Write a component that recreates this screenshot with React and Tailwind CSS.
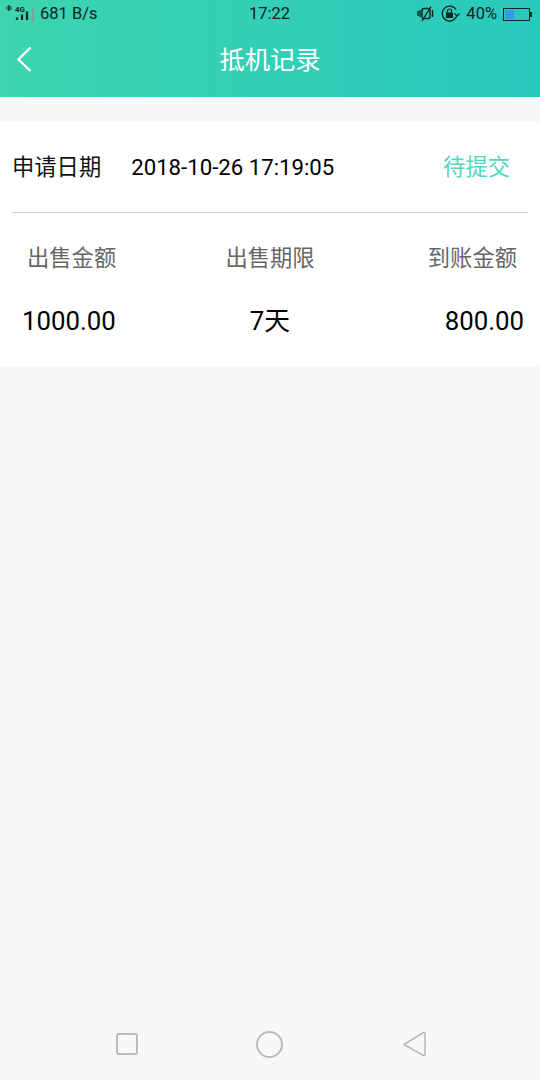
const font = { fontFamily: 'Roboto, "Noto Sans CJK SC", sans-serif' };

export default function App() {
  return (
    <div className="flex h-[1080px] w-[540px] flex-col overflow-hidden bg-[#f8f8f8]" style={font}>
      {/* header */}
      <div className="h-[97px] bg-gradient-to-r from-[#3dd4ae] to-[#28c9bd]">
        <div className="flex h-[28px] items-center pl-[6px] pr-[8px] text-[16.5px] text-[#10231f]">
          <div className="flex w-[243px] items-center">
            <svg width="26" height="28" viewBox="0 0 26 28" fill="none">
              <path d="M0 8l2.5-2.5v5zM3.5 5.5v5M5 6l0 4" stroke="#10231f" strokeWidth="0.8" />
              <text x="9" y="11.5" fontSize="8" fontWeight="700" fill="#10231f">4G</text>
              <path d="M11 20v-2.5M16 20v-5.5M21 20v-8.5" stroke="#10231f" strokeWidth="2.2" />
            </svg>
            <div className="h-[15px] w-[2px] bg-[#7f9f98]" />
            <span className="ml-[6px]">681 B/s</span>
          </div>
          <span>17:22</span>
          <div className="ml-auto flex items-center">
            <svg width="18" height="16" viewBox="0 0 18 16" fill="none" stroke="#10231f" strokeWidth="1.4">
              <rect x="5" y="2.5" width="8" height="10" rx="2" />
              <path d="M14 0.5L5 15M1 5v5M3 4v7M15.5 4v7" />
            </svg>
            <svg className="ml-[6px]" width="19" height="18" viewBox="0 0 19 18" fill="none" stroke="#10231f" strokeWidth="1.2">
              <path d="M15.8 11A7.5 7.5 0 1 1 15 4.5" />
              <path d="M13.5 8.5L16 11l2.5-2.5" />
              <rect x="5" y="7.5" width="7" height="5.5" fill="#10231f" stroke="none" />
              <path d="M6.5 7.5V6a2 2 0 0 1 4 0v1.5" />
            </svg>
            <span className="ml-[6px]">40%</span>
            <div className="ml-[6px] flex items-center">
              <div className="flex h-[13px] w-[27px] border border-[#10231f] p-[1px]">
                <div className="w-[9px] bg-[#2f9bf0]" />
              </div>
              <div className="h-[5px] w-[2px] bg-[#10231f]" />
            </div>
          </div>
        </div>
        <div className="relative flex h-[65px] items-center justify-center">
          <svg className="absolute left-[16px] top-[18px]" width="17" height="26" viewBox="0 0 17 26" fill="none" stroke="white" strokeWidth="2.4">
            <path d="M14.5 1.5L2.5 13.5l12 11.5" />
          </svg>
          <span className="text-[25.3px] text-white">抵机记录</span>
        </div>
      </div>

      {/* record card */}
      <div className="mt-[24px] h-[246px] bg-white px-[12px]">
        <div className="flex h-[92px] items-center border-b border-[#cccccc] pt-[2px]">
          <span className="text-[22.3px] text-[#111111]">申请日期</span>
          <span className="ml-[30px] text-[22.2px] text-black">2018-10-26 17:19:05</span>
          <span className="ml-auto mr-[18px] text-[22.3px] text-[#4fd8bc]">待提交</span>
        </div>
        <div className="mt-[30px] grid grid-cols-3 text-center text-[22.3px] leading-[30px] text-[#666666]">
          <span className="pl-[15px] text-left">出售金额</span>
          <span>出售期限</span>
          <span className="pr-[11px] text-right">到账金额</span>
        </div>
        <div className="mt-[33px] grid grid-cols-3 text-center text-[25.8px] leading-[30px] text-black">
          <span className="pl-[10px] text-left">1000.00</span>
          <span>7天</span>
          <span className="pr-[4px] text-right">800.00</span>
        </div>
      </div>

      {/* nav bar */}
      <div className="mt-auto flex h-[58px] items-start">
        <div className="ml-[116px] mt-[11px] h-[22px] w-[22px] rounded-[3px] border-2 border-[#bbbbbb]" />
        <div className="ml-[118px] mt-[9px] h-[27px] w-[27px] rounded-full border-2 border-[#bbbbbb]" />
        <svg className="ml-[120px] mt-[8px]" width="24" height="28" viewBox="0 0 24 28" fill="none" stroke="#bbbbbb" strokeWidth="1.6" strokeLinejoin="round">
          <path d="M1 14.5L20.5 2.5c.8-.4 1.5 0 1.5 1v21c0 1-.7 1.4-1.5 1z" />
        </svg>
      </div>
    </div>
  );
}
